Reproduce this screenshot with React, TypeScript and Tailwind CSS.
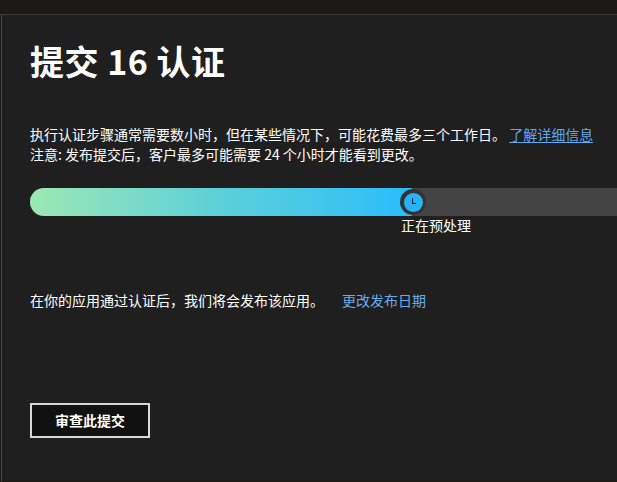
const FONT = { fontFamily: '"Microsoft YaHei", "Noto Sans CJK SC", "Noto Sans", sans-serif' };

export default function App() {
  const fill = 382;

  return (
    <div className="w-[617px] h-[482px] overflow-hidden bg-[#1b1a19] text-white" style={FONT}>
      <div className="h-[15px] border-b border-[#3a3a3a]" />
      <div className="ml-px h-[466px] border-l border-[#4a4a4a] bg-[#1f1f1f] pl-[28px] pt-[24px]">
        <h1 className="text-[34px] font-bold leading-[44px] tracking-[0.5px]">提交 16 认证</h1>

        <div className="mt-[41px] text-[14px] leading-[20px]">
          <p>
            执行认证步骤通常需要数小时，但在某些情况下，可能花费最多三个工作日。{" "}
            <a className="text-[#5fa9ee] underline underline-offset-2">了解详细信息</a>
          </p>
          <p>注意: 发布提交后，客户最多可能需要 24 个小时才能看到更改。</p>
        </div>

        <div className="mt-[24px]">
          <div className="flex h-[28px] items-center rounded-l-full bg-[#444444]">
            <div
              className="h-full rounded-l-full bg-gradient-to-r from-[#9be8b2] via-[#5ad0d8] to-[#27bdfb]"
              style={{ width: `${fill}px` }}
            />
            <div className="-ml-[12px] flex h-[26px] w-[26px] shrink-0 items-center justify-center rounded-full bg-[#333333]">
              <div className="relative h-[19px] w-[19px] rounded-full bg-[#27b4f5]">
                <div className="absolute left-[8px] top-[5px] h-[5px] w-px bg-[#10204a]" />
                <div className="absolute left-[8px] top-[10px] h-px w-[4px] bg-[#10204a]" />
              </div>
            </div>
          </div>
          <div className="-mt-px ml-[371px] text-[14px] leading-[20px]">正在预处理</div>
        </div>

        <div className="mt-[55px] flex items-center text-[14px] leading-[20px]">
          <span>在你的应用通过认证后，我们将会发布该应用。</span>
          <a className="ml-[18px] text-[#6aacea]">更改发布日期</a>
        </div>

        <button className="mt-[93px] flex h-[35px] w-[120px] items-center justify-center border-2 border-[#d8d8d8] bg-[#111111] text-[14px] font-bold text-white">
          审查此提交
        </button>
      </div>
    </div>
  );
}
